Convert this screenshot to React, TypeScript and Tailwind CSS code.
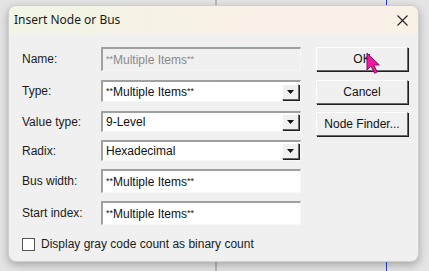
import React from "react";

const label = "text-[12px] text-[#1b1b1b] leading-none";
const sunken =
  "border-t-2 border-l-2 border-b border-r border-t-[#a0a0a0] border-l-[#a0a0a0] border-b-[#f7f7f7] border-r-[#f7f7f7]";
const raised =
  "border border-t-white border-l-white border-b-[#696969] border-r-[#696969] shadow-[1px_1px_0_#1e1e1e]";

function Row({ name, top, h, children }: { name: string; top: string; h: string; children: React.ReactNode }) {
  return (
    <div className={`flex items-center ${top} ${h}`}>
      <div className={`w-[79px] shrink-0 ${label}`}>{name}</div>
      {children}
    </div>
  );
}

function Value({ text }: { text: string }) {
  // the dialog font draws asterisks small and raised
  const m = text.match(/^\*\*(.*)\*\*$/);
  if (!m) return <>{text}</>;
  return (
    <>
      <span className="relative -top-[2px] text-[9px]">**</span>
      {m[1]}
      <span className="relative -top-[2px] text-[9px]">**</span>
    </>
  );
}

function Field({ value, disabled }: { value: string; disabled?: boolean }) {
  return (
    <div
      className={`flex h-full w-[200px] items-center pl-[3px] text-[12px] ${sunken} ${
        disabled ? "bg-[#f0f0f0] text-[#8a8a8a]" : "bg-white text-[#111]"
      }`}
    >
      <span>
        <Value text={value} />
      </span>
    </div>
  );
}

function Combo({ value }: { value: string }) {
  return (
    <div className={`flex h-full w-[200px] items-center bg-white pl-[3px] text-[12px] text-[#111] ${sunken}`}>
      <span className="flex-1">
        <Value text={value} />
      </span>
      <div className={`mr-[1px] flex h-[16px] w-[17px] items-center justify-center bg-[#f0f0f0] ${raised}`}>
        <svg width="7" height="4" viewBox="0 0 7 4">
          <path d="M0 0h7L3.5 4z" fill="#111" />
        </svg>
      </div>
    </div>
  );
}

function Btn({ text, top }: { text: string; top: string }) {
  return (
    <div
      className={`flex h-[24px] w-[92px] items-center justify-center bg-[#f0f0f0] text-[12px] text-[#111] ${raised} ${top}`}
    >
      {text}
    </div>
  );
}

export default function App() {
  return (
    <div
      className="relative h-[271px] w-[429px] overflow-hidden bg-[#e4e4e4] pl-[8px] pt-[5px]"
      style={{ fontFamily: '"Liberation Sans", Arial, sans-serif' }}
    >
      <div className="absolute left-[386px] top-0 h-full w-[1px] bg-[#2b3bd6]" />
      <div className="absolute left-[215px] top-0 h-full w-[2px] bg-[#b8b8b8]" />

      <div className="relative flex h-[257px] w-[411px] flex-col overflow-hidden rounded-[8px] border border-[#cfcfcf] bg-[#f0f0f0] shadow-[0_3px_9px_rgba(0,0,0,0.28)]">
        {/* Title bar */}
        <div className="flex h-[28px] shrink-0 items-center justify-between bg-gradient-to-r from-[#f0f5e4] via-[#f8f1e6] to-[#f9f0e6] pl-[5px] pr-[10px]">
          <span className="text-[12px] text-[#1a1a1a]" style={{ fontFamily: '"Noto Sans", sans-serif' }}>
            Insert Node or Bus
          </span>
          <svg width="11" height="11" viewBox="0 0 11 11">
            <path d="M0.5 0.5l10 10M10.5 0.5l-10 10" stroke="#222" strokeWidth="1.1" />
          </svg>
        </div>

        {/* Body */}
        <div className="flex flex-1 pl-[13px]">
          <div className="flex flex-col">
            <Row name="Name:" top="mt-[13px]" h="h-[24px]">
              <Field value="**Multiple Items**" disabled />
            </Row>
            <Row name="Type:" top="mt-[9px]" h="h-[22px]">
              <Combo value="**Multiple Items**" />
            </Row>
            <Row name="Value type:" top="mt-[9px]" h="h-[21px]">
              <Combo value="9-Level" />
            </Row>
            <Row name="Radix:" top="mt-[8px]" h="h-[21px]">
              <Combo value="Hexadecimal" />
            </Row>
            <Row name="Bus width:" top="mt-[8px]" h="h-[24px]">
              <Field value="**Multiple Items**" />
            </Row>
            <Row name="Start index:" top="mt-[8px]" h="h-[24px]">
              <Field value="**Multiple Items**" />
            </Row>
            <div className="mt-[10px] flex items-center gap-[6px]">
              <div className="h-[13px] w-[13px] border border-[#555] bg-white" />
              <span className="text-[12px] text-[#1b1b1b]">Display gray code count as binary count</span>
            </div>
          </div>
          <div className="ml-[15px] flex flex-col">
            <Btn text="OK" top="mt-[13px]" />
            <Btn text="Cancel" top="mt-[9px]" />
            <Btn text="Node Finder..." top="mt-[8px]" />
          </div>
        </div>
      </div>

      {/* mouse cursor */}
      <svg className="absolute left-[366px] top-[52px]" width="15" height="22" viewBox="0 0 15 22">
        <path
          d="M1 1v17l4-4 3.6 7.2 2.6-1.2-3.5-7h5.6z"
          fill="#ee1aa0"
          stroke="#8c0a5a"
          strokeWidth="1"
          strokeLinejoin="round"
        />
      </svg>
    </div>
  );
}
